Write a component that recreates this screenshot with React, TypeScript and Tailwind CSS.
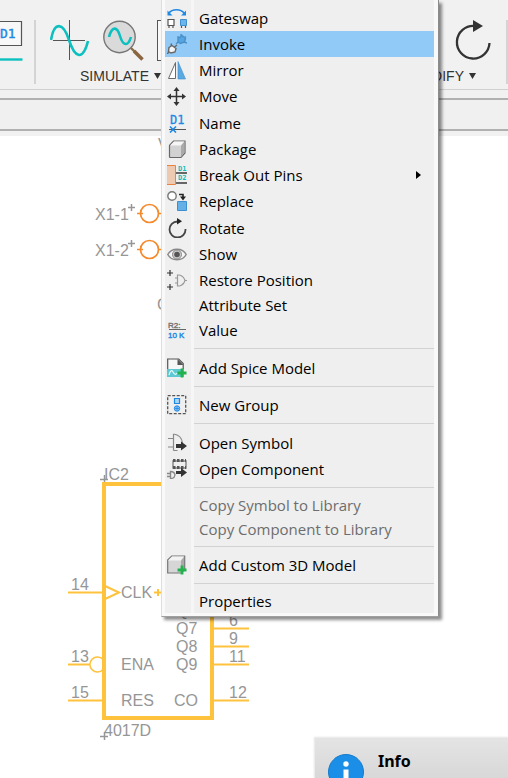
import type { ReactNode } from "react";

const GRAY = "#6b6b6b";
const BLUE = "#1e88e5";

function Icon({ children }: { children: ReactNode }) {
  return (
    <svg width="20" height="20" viewBox="0 0 20 20" fill="none" aria-hidden="true">
      {children}
    </svg>
  );
}

const Plus = ({ x, y }: { x: number; y: number }) => (
  <path d={`M${x - 3} ${y}h6M${x} ${y - 3}v6`} stroke="#333" strokeWidth="1.2" />
);

const GreenPlus = () => <path d="M10.5 15h9M15 10.5v9" stroke="#22b14c" strokeWidth="2.8" />;

const icons: Record<string, ReactNode> = {
  gateswap: (
    <Icon>
      <path d="M2 5C5 .6 14 .6 17 5" stroke={BLUE} strokeWidth="1.6" />
      <path d="M.5 2.500v5h5zM19 2.500v5h-5z" fill={BLUE} />
      <path d="M1 11.500h6v6H1zM2 17.500v3M6 17.500v3" fill="#fff" stroke="#555" strokeWidth="1.2" />
      <path d="M13.500 11.500h6v6h-6z" fill="#6cb4ea" stroke="#3e8fd0" />
      <path d="M14.500 18v2M18.500 18v2" stroke="#555" strokeWidth="1.2" />
    </Icon>
  ),
  invoke: (
    <Icon>
      <path d="M11 3l2 .5 2-2 3.500 3-1 3.500-4 1.500-2.500-1.500zM14 2.500V0M17 4l2-1.500M17 8l3 1M11 8l-2 2" fill="#55a5e0" stroke="#4a90c8" strokeWidth="1.400" />
      <path d="M2 13.500l3-2 4 3-1 3.500-4 1-2.500-1.500zM4 12l.5-2.500M7.500 13l2.500-2M2 18l-2 2" fill="#f4f4f4" stroke="#666" strokeWidth="1.400" />
    </Icon>
  ),
  mirror: (
    <Icon>
      <path d="M8.500 2.500v16H1.500z" fill="#fff" stroke={GRAY} />
      <path d="M11 1.500l7.500 17.500H11z" fill="#5aa9e0" stroke="#3e8fd0" strokeWidth=".6" />
    </Icon>
  ),
  move: (
    <Icon>
      <path d="M9.500 3v15M2 10.500h15" stroke="#333" strokeWidth="1.500" />
      <path d="M9.500 1l3 4h-6zM9.500 20l3-4h-6zM0 10.500l4-3v6zM19 10.500l-4-3v6z" fill="#333" />
    </Icon>
  ),
  name: (
    <Icon>
      <text x="3" y="11" fontFamily="DejaVu Sans Mono, monospace" fontSize="12" fill={BLUE} stroke={BLUE} strokeWidth=".3">D1</text>
      <path d="M2 16.500h17" stroke="#555" />
      <path d="M3 13.500l6 6M9 13.500l-6 6" stroke={BLUE} strokeWidth="1.600" />
    </Icon>
  ),
  package: (
    <Icon>
      <path d="M2.500 6.500l4-4.500h11.500v12l-4 4.500h-11l-.5-.5z" fill="#d2d2d2" stroke="#686868" strokeWidth="1.200" />
      <path d="M3 6.500L7 2.500h10.500L14 6.500z" fill="#f5f5f5" />
      <path d="M14 6.500l3.500-4v11L14 18z" fill="#aaa" />
    </Icon>
  ),
  pins: (
    <Icon>
      <path d="M0 .5h8.500v19H0" fill="#edc9b2" stroke="#e88343" />
      <text x="11" y="6" fontFamily="DejaVu Sans Mono, monospace" fontWeight="700" fontSize="7" fill="#14bcbc">D1</text>
      <text x="11" y="15" fontFamily="DejaVu Sans Mono, monospace" fontWeight="700" fontSize="7" fill="#14bcbc">D2</text>
      <path d="M9 8h11M9 18h11" stroke="#666" strokeWidth="2" />
    </Icon>
  ),
  replace: (
    <Icon>
      <circle cx="5" cy="5" r="4.200" stroke="#777" strokeWidth="1.400" fill="#fff" />
      <path d="M12 3.500h4v3" stroke="#222" strokeWidth="1.600" />
      <path d="M13 5.500h6l-3 4z" fill="#222" />
      <path d="M10.500 10.500h9v9h-9z" fill="#66b0e8" stroke="#3e8fd0" />
    </Icon>
  ),
  rotate: (
    <Icon>
      <path d="M18.500 11a8 8 0 1 1-8-7.500H12" stroke="#444" strokeWidth="1.800" />
      <path d="M10 0l5 3.200-5 3.300z" fill="#222" />
    </Icon>
  ),
  show: (
    <Icon>
      <path d="M.8 10.500C4.500 3.500 15.500 3.500 19.200 10.500 15.500 17.500 4.500 17.500 .8 10.500z" fill="#f7f7f7" stroke="#888" strokeWidth="1.500" />
      <circle cx="10" cy="10.500" r="4.500" fill="#ccc" stroke="#888" />
      <circle cx="10" cy="10.500" r="2.800" fill="#555" />
    </Icon>
  ),
  restore: (
    <Icon>
      <Plus x={3} y={3} />
      <Plus x={3} y={17} />
      <path d="M10.500 5h2q4 1 5.500 5.500-1.500 4.500-5.500 5.500h-2zM8 8h2M8 13h2M18 10.500h2" stroke="#999" strokeWidth="1.200" />
    </Icon>
  ),
  value: (
    <Icon>
      <text x="1" y="8" fontFamily="Liberation Sans, sans-serif" fontSize="8" fill="#777" stroke="#777" strokeWidth=".4">R2:</text>
      <path d="M2 9.500h17" stroke="#666" />
      <text x="1" y="18" fontFamily="Liberation Sans, sans-serif" fontSize="8" fill={BLUE} stroke={BLUE} strokeWidth=".4">10 K</text>
    </Icon>
  ),
  spice: (
    <Icon>
      <path d="M.7 11V1h11l4.500 4.500V11" fill="#f7f7f7" stroke="#555" strokeWidth="1.200" />
      <path d="M10.500 1l6 6h-6z" fill="#555" />
      <path d="M0 11h17v8H0z" fill="#5cc8d2" />
      <path d="M2 17q2-7 4-3t4 1" stroke="#e6fbfb" strokeWidth="1.200" />
      <GreenPlus />
    </Icon>
  ),
  group: (
    <Icon>
      <path d="M.7 .7h18v18H.7z" stroke="#555" strokeWidth="1.300" strokeDasharray="3 1.500" />
      <path d="M7.500 3.500h5v5h-5z" fill="#a8d4f8" stroke={BLUE} strokeWidth="1.200" />
      <circle cx="10" cy="13.500" r="2.700" fill="#8cc4f4" stroke={BLUE} />
      <path d="M8 13.500h4M10 11.500v4" stroke={BLUE} strokeWidth=".8" />
    </Icon>
  ),
  symbol: (
    <Icon>
      <path d="M6.500 1v16.500M6.500 1q8 1 9 9M6.500 17.500h4M1 5.500h5M1 14h5" stroke="#888" strokeWidth="1.200" />
      <path d="M9 11h5V8.500l6 4.500-6 4.500V15H9z" fill="#333" />
    </Icon>
  ),
  component: (
    <Icon>
      <path d="M6 2h13v7H6z" stroke="#888" strokeWidth="1.500" />
      <path d="M6 1.500h13M6 8.500h13" stroke="#555" strokeWidth="3" strokeDasharray="2.500 1.500" />
      <path d="M3.500 12.500q4 0 4.500 3.500-.5 3.500-4.500 3.500zM0 14.500h3M0 17.500h3" stroke="#888" strokeWidth="1.400" />
      <path d="M9 12h5V9l6 4.500-6 4.500v-3H9z" fill="#333" />
    </Icon>
  ),
  model: (
    <Icon>
      <path d="M.7 5l4-4h13v13l-3 4H.7z" fill="#d6d6d6" stroke="#777" strokeWidth="1.200" />
      <path d="M1 5.500l4-4h12L14 5.500z" fill="#f3f3f3" />
      <path d="M14 5.500l3-3.500v12h-3z" fill="#aaa" />
      <GreenPlus />
    </Icon>
  ),
};

type Entry = {
  label: string;
  icon?: string;
  height?: string;
  active?: boolean;
  disabled?: boolean;
  submenu?: boolean;
};

const sections: Entry[][] = [
  [
    { label: "Gateswap", icon: "gateswap" },
    { label: "Invoke", icon: "invoke", active: true },
    { label: "Mirror", icon: "mirror" },
    { label: "Move", icon: "move" },
    { label: "Name", icon: "name", height: "h-[27px]" },
    { label: "Package", icon: "package" },
    { label: "Break Out Pins", icon: "pins", submenu: true },
    { label: "Replace", icon: "replace" },
    { label: "Rotate", icon: "rotate", height: "h-[27px]" },
    { label: "Show", icon: "show" },
    { label: "Restore Position", icon: "restore" },
    { label: "Attribute Set", height: "h-6" },
    { label: "Value", icon: "value" },
  ],
  [{ label: "Add Spice Model", icon: "spice", height: "h-[27px]" }],
  [{ label: "New Group", icon: "group" }],
  [
    { label: "Open Symbol", icon: "symbol", height: "h-[27px]" },
    { label: "Open Component", icon: "component" },
  ],
  [
    { label: "Copy Symbol to Library", height: "h-6", disabled: true },
    { label: "Copy Component to Library", height: "h-6", disabled: true },
  ],
  [{ label: "Add Custom 3D Model", icon: "model" }],
  [{ label: "Properties", height: "h-6" }],
];

function MenuRow({ label, icon, height = "h-[26px]", active, disabled, submenu }: Entry) {
  return (
    <button
      role="menuitem"
      disabled={disabled}
      aria-haspopup={submenu ? "menu" : undefined}
      className={`flex w-full items-center text-left ${height} ${active ? "bg-[#91c9f7]" : ""} ${disabled ? "text-[#6d6d6d]" : "text-black"}`}
    >
      <span className="flex w-[34px] shrink-0 pl-[2px]">{icon && icons[icon]}</span>
      <span className="flex-1 whitespace-nowrap">{label}</span>
      {submenu && (
        <svg width="5" height="8" viewBox="0 0 5 8" className="mr-[13px]" aria-hidden="true">
          <path d="M0 0l5 4-5 4z" fill="#000" />
        </svg>
      )}
    </button>
  );
}

function ContextMenu() {
  return (
    <div
      role="menu"
      className="absolute top-0 left-[161px] w-[278px] border-r border-b border-l border-l-[#dedede] border-r-[#8c8c8c] border-b-[#a0a0a0] bg-[#f9f9f9] pr-1 pb-[3px] pl-[3px] font-['Open_Sans','Noto_Sans',sans-serif] text-[15px] leading-5 shadow-[3px_3px_3px_rgba(0,0,0,0.45)]"
    >
      <div className="bg-[linear-gradient(to_right,#efefef_26px,#f6f6f6_26px,#f6f6f6_29px,#efefef_29px)] pt-[5px]">
        {sections.map((entries, i) => (
          <div key={entries[0].label}>
            {i > 0 && (
              <div role="separator" className="py-[5px] pl-[29px]">
                <div className="h-px bg-[#d2d2d2]" />
              </div>
            )}
            {entries.map((entry) => (
              <MenuRow key={entry.label} {...entry} />
            ))}
          </div>
        ))}
      </div>
    </div>
  );
}

function Caption({ children }: { children: string }) {
  return (
    <button className="flex items-center gap-[5px] text-sm leading-4 text-[#333]">
      {children}
      <svg width="7" height="6" viewBox="0 0 7 6" aria-hidden="true">
        <path d="M0 0h7L3.500 6z" fill="#333" />
      </svg>
    </button>
  );
}

function Toolbar() {
  return (
    <header className="shrink-0 bg-[#f1f1f1]">
      <div className="flex h-[90px] justify-between border-b border-[#d0d0d0] pt-5 pb-[5px]">
        <div className="flex">
          <button aria-label="Name" className="flex h-16 w-9 items-start border-r-2 border-[#d4d4d4]">
            <svg width="23" height="42" viewBox="0 0 23 42" aria-hidden="true">
              <path d="M-20 1.500h41.500v24H-20z" fill="#f8f8f8" stroke="#555" strokeWidth="1.200" />
              <text x="0" y="18" fontFamily="DejaVu Sans Mono, monospace" fontSize="13" fill="#1e88e5" stroke="#1e88e5" strokeWidth=".4">D1</text>
              <path d="M0 39.500h22.500" stroke="#0cc0c0" strokeWidth="2.400" />
            </svg>
          </button>
          <div className="flex flex-col items-end justify-between pl-[14px]">
            <div className="flex gap-[13px]">
              <button aria-label="Simulate">
                <svg width="40" height="42" viewBox="0 0 40 42" fill="none" aria-hidden="true">
                  <path d="M19.500 0v40M3 20.500h32" stroke="#555" />
                  <path d="M1 20C4 1.500 13 1.500 19 20S33 41 38 21" stroke="#0cc0c0" strokeWidth="2.600" />
                </svg>
              </button>
              <button aria-label="Probe">
                <svg width="41" height="42" viewBox="0 0 41 42" fill="none" aria-hidden="true">
                  <circle cx="16.500" cy="17" r="15.700" fill="#dadada" stroke="#777" strokeWidth="1.400" />
                  <path d="M6 17C9 6 14 6 17 16S25 27 28 17" stroke="#0cc0c0" strokeWidth="2.600" />
                  <path d="M28 28l3.500 3.500" stroke="#8a6d48" strokeWidth="2.400" />
                  <path d="M31 31l8.500 8.500" stroke="#8a6540" strokeWidth="3.600" />
                </svg>
              </button>
              <button aria-label="Results" className="h-[41px] w-8 border border-[#555] bg-[#f8f8f8]" />
            </div>
            <div className="pr-7">
              <Caption>SIMULATE</Caption>
            </div>
          </div>
        </div>
        <div className="flex">
          <div className="flex flex-col items-end justify-between pr-[14px]">
            <button aria-label="Rotate">
              <svg width="37" height="42" viewBox="0 0 37 42" fill="none" aria-hidden="true">
                <path d="M34.500 23a16.300 16.300 0 1 1-15-17" stroke="#333" strokeWidth="2.300" />
                <path d="M18 0l10 6-10 6z" fill="#333" />
              </svg>
            </button>
            <div className="pr-4">
              <Caption>MODIFY</Caption>
            </div>
          </div>
          <div className="h-16 w-[2px] bg-[#d4d4d4]" />
        </div>
      </div>
      <div className="mt-2 h-[33px] border-y-2 border-[#b0b0b0] bg-[#f0f0f0]" />
      <div className="h-[5px]" />
    </header>
  );
}

const pins = [
  { n: "14", tx: 71, y: 456, x1: 68, x2: 103 },
  { n: "13", tx: 71, y: 528, x1: 68, x2: 90 },
  { n: "15", tx: 71, y: 564, x1: 68, x2: 103 },
  { n: "6", tx: 229, y: 492, x1: 213, x2: 249 },
  { n: "9", tx: 229, y: 510, x1: 213, x2: 249 },
  { n: "11", tx: 229, y: 528, x1: 213, x2: 249 },
  { n: "12", tx: 229, y: 564, x1: 213, x2: 249 },
];

const labels = [
  { t: "CLK", x: 121, y: 462 },
  { t: "ENA", x: 121, y: 534 },
  { t: "RES", x: 121, y: 570 },
  { t: "Q6", x: 176, y: 480 },
  { t: "Q7", x: 176, y: 498 },
  { t: "Q8", x: 176, y: 516 },
  { t: "Q9", x: 176, y: 534 },
  { t: "CO", x: 174, y: 570 },
];

function Schematic() {
  return (
    <svg className="block h-[642px] w-full font-['Liberation_Sans',Arial,sans-serif]" fill="none" aria-label="Schematic">
      <g fill="#969696" fontSize="16">
        <text x="158" y="14">V</text>
        <text x="157" y="174">C</text>
        <text x="95" y="84">X1-1</text>
        <text x="95" y="120">X1-2</text>
        <text x="104" y="344">IC2</text>
        <text x="104" y="600">4017D</text>
        {labels.map((l) => (
          <text key={l.t} x={l.x} y={l.y}>{l.t}</text>
        ))}
        {pins.map((p) => (
          <text key={p.n} x={p.tx} y={p.y - 2}>{p.n}</text>
        ))}
      </g>
      <path d="M128 71.500h7M131.500 68v7M128 107.500h7M131.500 104v7M100 343.500h8M104.500 339v8M100 600.500h8M104.500 596v8" stroke="#969696" strokeWidth="1.500" />
      <g stroke="#f58a2c" strokeWidth="1.700">
        <circle cx="149.500" cy="77.500" r="9" />
        <circle cx="149.500" cy="113.500" r="9" />
        <path d="M137 77.500h6M158 77.500h6M137 113.500h6M158 113.500h6" />
      </g>
      <g stroke="#ffc23c">
        <path d="M104 348h108v234H104z" strokeWidth="4" />
        {pins.map((p) => (
          <path key={p.n} d={`M${p.x1} ${p.y + 0.5}H${p.x2}`} strokeWidth="2" />
        ))}
        <path d="M103 523.500a7.500 7.500 0 1 0 0 10" strokeWidth="1.500" />
        <path d="M105 450l14 6.500-14 6.500M154 456.500h8M158 453v7" strokeWidth="2" />
      </g>
    </svg>
  );
}

function InfoPanel() {
  return (
    <aside className="absolute right-0 bottom-0 left-[314px] flex h-[41px] items-start gap-[14px] overflow-hidden border-t border-l border-[#ececec] bg-linear-to-b from-[#e4e4e4] to-[#d8d8d8] pl-[13px] shadow-[0_0_2px_rgba(0,0,0,0.1)]">
      <svg width="36" height="36" viewBox="0 0 36 36" className="mt-4 shrink-0" aria-hidden="true">
        <circle cx="18" cy="18" r="17.500" fill="#1b8fe8" stroke="#167bca" />
        <circle cx="18" cy="10" r="2.700" fill="#fff" />
        <path d="M15.500 15.500h5V29h-5z" fill="#fff" />
      </svg>
      <h2 className="mt-[11px] font-['Noto_Sans',sans-serif] text-base leading-6 font-bold text-black">Info</h2>
    </aside>
  );
}

export default function App() {
  return (
    <main className="relative flex h-screen flex-col overflow-hidden bg-white font-['Liberation_Sans',Arial,sans-serif]">
      <Toolbar />
      <Schematic />
      <InfoPanel />
      <ContextMenu />
    </main>
  );
}
